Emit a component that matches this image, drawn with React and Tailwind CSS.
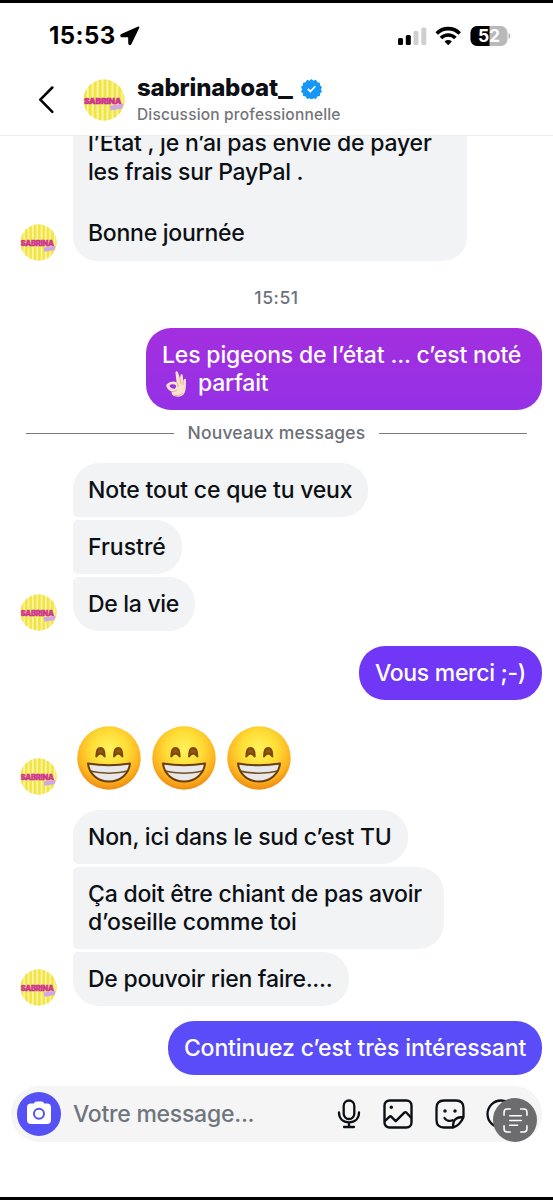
import React from "react";

function Avatar({ className }) {
  return (
    <svg viewBox="0 0 40 40" className={"shrink-0 " + className}>
      <defs>
        <clipPath id="avatarClip"><circle cx="20" cy="20" r="19.700" /></clipPath>
        <pattern id="avatarStripes" width="4.7" height="40" patternUnits="userSpaceOnUse">
          <rect width="4.7" height="40" fill="#fbf6b4" />
          <rect x="0.6" width="3" height="40" fill="#f2e440" />
        </pattern>
      </defs>
      <g clipPath="url(#avatarClip)">
        <rect width="40" height="40" fill="url(#avatarStripes)" />
        <text x="0.900" y="23.500" textLength="35.500" lengthAdjust="spacingAndGlyphs" fontFamily="Inter, sans-serif" fontWeight="900" fontSize="7.600" fill="#e3359b" stroke="#b52a8c" strokeWidth="0.400">SABRINA</text>
        <path d="M25.500 25.500l13-2-1 4.500-11 2z" fill="#cfa6e8" />
      </g>
    </svg>
  );
}

function Grin() {
  return (
    <svg viewBox="0 0 64 64" className="size-16 shrink-0">
      <defs>
        <radialGradient id="face" cx="0.5" cy="0.36" r="0.64">
          <stop offset="0" stopColor="#fff45c" />
          <stop offset="0.45" stopColor="#ffdc35" />
          <stop offset="0.78" stopColor="#fdb320" />
          <stop offset="1" stopColor="#ee8a12" />
        </radialGradient>
        <clipPath id="mouth"><path d="M11 37.500Q32 41 53 37.500C52 48 43 55.500 32 55.500S12 48 11 37.500Z" /></clipPath>
      </defs>
      <circle cx="32" cy="32" r="31.700" fill="url(#face)" />
      <path d="M19.300 30.500C19.300 24.500 21 22 23.500 22S27.700 24.500 27.700 30.500Q23.500 24.500 19.300 30.500ZM37 30.500C37 24.500 38.800 22 41.200 22S45.400 24.500 45.400 30.500Q41.200 24.500 37 30.500Z" fill="#94590d" stroke="#7a480a" strokeWidth="1.900" strokeLinejoin="round" />
      <g clipPath="url(#mouth)">
        <rect x="10" y="36" width="44" height="21" fill="#e8e8ec" />
        <path d="M10 44.500Q32 50 54 44.500" fill="none" stroke="#77501a" strokeWidth="1.700" />
      </g>
      <path d="M11 37.500Q32 41 53 37.500C52 48 43 55.500 32 55.500S12 48 11 37.500Z" fill="none" stroke="#6b3e08" strokeWidth="2.100" strokeLinejoin="round" />
    </svg>
  );
}

function OkHand() {
  return (
    <svg viewBox="0 0 24 28" role="img" aria-label="👌🏻" className="mr-[9px] ml-[3px] inline-block h-[28px] w-[24px] shrink-0">
      <path fillRule="evenodd" d="M2.500 13.800C5 11.500 9 11 11.500 12.300L11.300 10 10.500 3.200C10.200 1 12.300 .500 13 2.500L15 8.500 15.500 5.500C15.800 3.800 17.500 4 17.700 5.500L18.300 11 19 9.500C19.600 8.300 21.200 8.700 21 10.500 20.800 14.500 21.300 19 19.700 22.500 18 26.500 13.500 27.500 9.800 26.300 7 25.300 6.500 23.500 6.500 21.500 4 20.500 1.300 17.500 1.300 15.500 1.300 14.700 1.800 14.200 2.500 13.800ZM4.300 15.700C5.500 17.800 7.500 19 9.800 18.700 11.200 17.700 11.500 16 10.600 15 8.500 13.800 6 14.200 4.300 15.700Z" fill="#fce1cd" />
      <path d="M11.500 12.300c1.500 1 2 2.500 1.500 4.500M7 21.500c1.700.3 3.500-.2 4.800-1.300M15 8.500l.9 5M18.300 11l-.3 3.300M9 25c3 1.200 6.500.5 8.500-1.500" fill="none" stroke="#d59b84" strokeWidth="0.700" strokeLinecap="round" />
    </svg>
  );
}

function Received({ className, children }) {
  return (
    <div className={"flex items-center rounded-r-[26px] bg-[#f2f3f5] pl-[15px] whitespace-nowrap text-[#0c1014] " + className}>
      {children}
    </div>
  );
}

export default function App() {
  return (
    <div className="flex h-[1200px] w-[553px] flex-col overflow-hidden border-t-[3px] border-b-[3px] border-black bg-white font-['Inter',sans-serif] text-[23px] leading-[28.5px] font-medium tracking-[-0.2px] text-[#0c1014]">
      <header className="flex h-[133px] shrink-0 flex-col border-b border-[#eeeeef]">
        <div className="flex h-[66px] shrink-0 items-center pl-[49px] text-black">
          <span className="w-[67px] text-[24px] font-bold tracking-[0.4px] whitespace-nowrap">15:53</span>
          <svg viewBox="0 0 20 20" className="ml-[4px] size-[20px]"><path d="M18.500 1.300 1.600 8.800c-.9.400-.7 1.600.3 1.600l7 .1.100 7c0 1 1.300 1.300 1.700.3l7.900-16.400Z" fill="#000" stroke="#000" strokeWidth="1.500" strokeLinejoin="round" /></svg>
          <svg viewBox="0 0 114 22" className="ml-[257px] h-[22px] w-[114px]">
            <g fill="#000"><rect x="1" y="13" width="5" height="7" rx="1.500" /><rect x="8.800" y="10" width="5" height="10" rx="1.500" /></g>
            <g fill="#cfcfcf"><rect x="16.500" y="6" width="5" height="14" rx="1.500" /><rect x="24.300" y="2.500" width="5" height="17.500" rx="1.500" /></g>
            <g fill="none" stroke="#000" strokeWidth="3.600"><path d="M39.700 8.400a16.200 16.200 0 0 1 23 0" /><path d="M44 13a10.200 10.200 0 0 1 14.400 0" /></g>
            <path d="M47.500 16.400a5.500 5.500 0 0 1 7.400 0L51.200 20.200Z" fill="#000" />
            <clipPath id="battery"><rect x="73.500" y="1" width="37" height="20" rx="6.500" /></clipPath>
            <g clipPath="url(#battery)"><rect x="73" y="1" width="38" height="20" fill="#b9b9b9" /><rect x="73" y="1" width="19.500" height="20" fill="#000" /></g>
            <path d="M111.500 8c2.500.5 2.500 5.500 0 6Z" fill="#b9b9b9" />
            <text x="92" y="17.200" textAnchor="middle" fontSize="17.500" fontWeight="700" fill="#fff" fontFamily="Inter, sans-serif" letterSpacing="0">52</text>
          </svg>
        </div>
        <div className="flex h-[62px] shrink-0 items-center">
          <svg viewBox="0 0 16 28" className="ml-[38px] h-[28px] w-[16px]"><path d="M14.300 1.500 2.300 13.700l12 12.200" fill="none" stroke="#000" strokeWidth="2.500" strokeLinecap="round" strokeLinejoin="round" /></svg>
          <Avatar className="ml-[29px] size-[42px]" />
          <div className="ml-[12px] flex flex-col pt-[3px]">
            <div className="flex h-[26px] items-center">
              <span className="flex w-[159px] items-baseline text-[24px] font-extrabold tracking-[-0.2px] whitespace-nowrap">sabrinaboat<span className="inline-block origin-left scale-x-[1.28]">_</span></span>
              <svg viewBox="0 0 24 24" className="ml-[5px] size-[21px]">
                <path d="M12 1l2.300 2 2.900-.9 1.400 2.700 3 .5.100 3 2.300 2-1.300 2.700 1.300 2.700-2.300 2-.1 3-3 .5-1.400 2.700-2.900-.9-2.300 2-2.300-2-2.900.9-1.400-2.700-3-.5-.1-3-2.300-2L1.300 13 0 10.300l2.300-2 .1-3 3-.5 1.400-2.700 2.900.9Z" fill="#1598f5" />
                <path d="m7.700 12.400 3 3 5.600-6" fill="none" stroke="#fff" strokeWidth="2" />
              </svg>
            </div>
            <span className="h-[26px] text-[15.500px] leading-[26px] tracking-[0.18px] whitespace-nowrap text-[#737579]">Discussion professionnelle</span>
          </div>
        </div>
      </header>

      <main className="flex h-[950px] shrink-0 flex-col">
        <div className="flex h-[125px] shrink-0 items-end">
          <Avatar className="ml-[20px] size-[37px]" />
          <div className="ml-[16px] flex h-[125px] w-[394px] flex-col overflow-hidden rounded-b-[24px] bg-[#f2f3f5] pl-[15px] whitespace-nowrap">
            <p className="mt-[-7px] h-[29px] shrink-0">l’État , je n’ai pas envie de payer</p>
            <p className="h-[29px] shrink-0 tracking-[-0.27px]">les frais sur PayPal .</p>
            <p className="mt-[32px] h-[29px] shrink-0 tracking-[-0.25px]">Bonne journée</p>
          </div>
        </div>
        <p className="mt-[23px] h-[28px] text-center text-[17.500px] tracking-[0.600px] text-[#6b7079]">15:51</p>
        <div className="mt-[16px] mr-[11px] flex h-[82px] w-[396px] flex-col self-end rounded-[25px] bg-linear-to-b from-[#a32fdf] to-[#9530e5] pt-[13px] pl-[16px] whitespace-nowrap text-white">
          <p className="h-[28px] tracking-[-0.17px]">Les pigeons de l’état ... c’est noté</p>
          <p className="flex h-[29px] items-center"><OkHand />parfait</p>
        </div>
        <div className="mx-[26px] mt-[9px] flex h-[28px] items-center justify-between text-[17.500px] tracking-[0.2px] text-[#6b7079]">
          <span className="h-px w-[148px] bg-[#777a80]" />
          <span className="whitespace-nowrap">Nouveaux messages</span>
          <span className="h-px w-[148px] bg-[#777a80]" />
        </div>
        <Received className="mt-[16px] ml-[73px] h-[54px] w-[295px] rounded-tl-[26px] rounded-bl-[5px]">Note tout ce que tu veux</Received>
        <Received className="mt-[3px] ml-[73px] h-[54px] w-[109px] rounded-l-[5px] tracking-[0px]">Frustré</Received>
        <div className="mt-[3px] flex h-[54px] items-end">
          <Avatar className="ml-[20px] size-[37px]" />
          <Received className="ml-[16px] h-[54px] w-[122px] rounded-tl-[5px] rounded-bl-[26px] tracking-[-0.3px]">De la vie</Received>
        </div>
        <div className="mt-[15px] mr-[11px] flex h-[54px] w-[183px] items-center justify-center self-end rounded-[26px] bg-[#7137f6] text-white">
          <span className="tracking-[-0.3px] whitespace-nowrap">Vous merci ;-)</span>
        </div>
        <div className="mt-[26px] flex h-[69px]">
          <Avatar className="ml-[20px] size-[37px] self-end" />
          <div className="ml-[20px] flex gap-[11px]"><Grin /><Grin /><Grin /></div>
        </div>
        <Received className="mt-[15px] ml-[73px] h-[54px] w-[335px] rounded-tl-[26px] rounded-bl-[5px] tracking-[-0.23px]">Non, ici dans le sud c’est TU</Received>
        <Received className="mt-[3px] ml-[73px] h-[82px] w-[371px] rounded-l-[5px] tracking-[-0.22px]">
          <div><p>Ça doit être chiant de pas avoir</p><p className="tracking-[-0.12px]">d’oseille comme toi</p></div>
        </Received>
        <div className="mt-[3px] flex h-[54px] items-end">
          <Avatar className="ml-[20px] size-[37px]" />
          <Received className="ml-[16px] h-[54px] w-[276px] rounded-tl-[5px] rounded-bl-[26px] tracking-[-0.27px]">De pouvoir rien faire....</Received>
        </div>
        <div className="mt-[15px] mr-[11px] flex h-[54px] w-[374px] shrink-0 items-center justify-center self-end rounded-[26px] bg-[#5b4cfa] text-white">
          <span className="tracking-[-0.12px] whitespace-nowrap">Continuez c’est très intéressant</span>
        </div>
      </main>

      <footer className="relative mx-[11px] flex h-[56px] shrink-0 items-center rounded-full bg-[#f5f5f6] pl-[6px]">
        <div className="flex size-[44px] items-center justify-center rounded-full bg-[#5551f5]">
          <svg viewBox="0 0 24 24" className="mb-[3px] size-[24px]">
            <path d="M7.500 1.500Q8 .5 9.500.5h5q1.500 0 2 1l.7 1H20q4 0 4 4V19q0 4-4 4H4q-4 0-4-4V6.500q0-4 4-4h2.800Z" fill="#fff" />
            <circle cx="12" cy="12.700" r="5" fill="none" stroke="#5551f5" strokeWidth="2" />
          </svg>
        </div>
        <span className="ml-[12px] w-[181px] tracking-[-0.25px] whitespace-nowrap text-[#6f757d]">Votre message...</span>
        <svg viewBox="0 0 24 30" className="ml-[83px] h-[30px] w-[24px]" fill="none" stroke="#0c1014" strokeWidth="2.300" strokeLinecap="round"><rect x="6.700" y="1.500" width="10.600" height="18.500" rx="5.300" /><path d="M2 13.500c0 6 4 9.800 10 9.800s10-3.800 10-9.800M12 23.500v4M7 28h10" /></svg>
        <svg viewBox="0 0 30 30" className="ml-[22px] size-[30px]" fill="none" stroke="#0c1014" strokeWidth="2.400" strokeLinecap="round" strokeLinejoin="round"><rect x="1.500" y="1.500" width="27" height="27" rx="5" /><path d="m2 22 4.500-4.300c.6-.6 1.300-.5 1.900.1l4.400 4.400 8.500-8.500c.7-.7 1.500-.7 2.200 0L28 18.500" /><circle cx="8.300" cy="8.300" r="1" fill="#0c1014" strokeWidth="1.500" /></svg>
        <svg viewBox="0 0 30 30" className="ml-[22px] size-[30px]" fill="none" stroke="#0c1014" strokeWidth="2.300" strokeLinecap="round" strokeLinejoin="round"><path d="M18 28.500H9q-7.500 0-7.500-7.500V9Q1.500 1.500 9 1.500h12q7.500 0 7.500 7.500v9Q27 22 24 25t-6 3.500ZM18 28.500c0-6 1-10.500 10.500-10.500M9.500 19c1.500 2.500 5 3.500 8 2.200" /><circle cx="10" cy="12" r="1.100" fill="#0c1014" strokeWidth="1.300" /><circle cx="20" cy="12" r="1.100" fill="#0c1014" strokeWidth="1.300" /></svg>
        <svg viewBox="0 0 30 30" className="ml-[21px] size-[30px]" fill="none" stroke="#0c1014" strokeWidth="2.300"><circle cx="15" cy="15" r="13.500" /><path d="M8 15h14M15 8v14" /></svg>
        <div className="absolute top-[12px] right-[5px] flex size-[44px] items-center justify-center rounded-full bg-[#6c6c6e]">
          <svg viewBox="0 0 24 24" className="size-[25px]" fill="none" stroke="#fff" strokeWidth="1.500" strokeLinecap="round"><path d="M1 7V4q0-3 3-3h3M17 1h3q3 0 3 3v3M23 17v3q0 3-3 3h-3M7 23H4q-3 0-3-3v-3M6.500 7.500h11M6.500 12h11M6.500 16.500h7.500" /></svg>
        </div>
      </footer>
    </div>
  );
}
